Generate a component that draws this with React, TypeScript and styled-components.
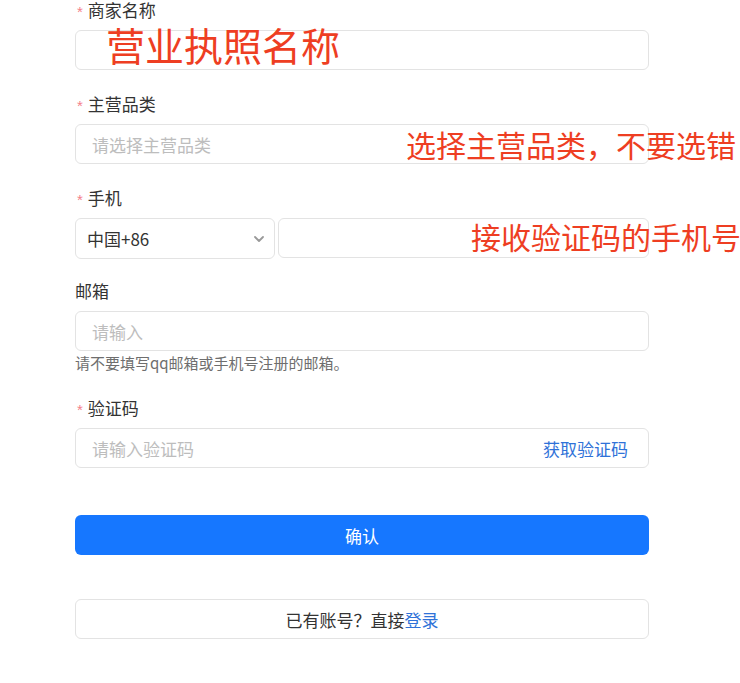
import styled, { createGlobalStyle } from "styled-components";

const GlobalStyle = createGlobalStyle`
  html, body {
    margin: 0;
    padding: 0;
    background: #ffffff;
  }
  body {
    font-family: "Noto Sans CJK SC", "Noto Sans", sans-serif;
    color: #333333;
  }
`;

type FieldProps = {
  label: string;
  required?: boolean;
  children: React.ReactNode;
  note?: string;
};

function Field({ label, required, children, note }: FieldProps) {
  return (
    <FieldWrap>
      <Label>
        {required && <Star>*</Star>}
        {label}
      </Label>
      {children}
      {note && <Hint>{note}</Hint>}
    </FieldWrap>
  );
}

export default function App() {
  return (
    <>
      <GlobalStyle />
      <Page>
        <Form>
          <Field label="商家名称" required>
            <Box>
              <TextInput />
              <Note $left={30} $top={-6} $size={39}>营业执照名称</Note>
            </Box>
          </Field>

          <Field label="主营品类" required>
            <Box>
              <TextInput placeholder="请选择主营品类" />
              <Note $left={330} $top={4} $size={30}>选择主营品类，不要选错</Note>
            </Box>
          </Field>

          <Field label="手机" required>
            <PhoneRow>
              <Select>
                <span>中国+86</span>
                <svg width="12" height="8" viewBox="0 0 12 8">
                  <path d="M2 2 L6 6 L10 2" fill="none" stroke="#999999" strokeWidth="1.8" strokeLinecap="round" strokeLinejoin="round" />
                </svg>
              </Select>
              <Box $grow>
                <TextInput />
                <Note $left={192} $top={2} $size={30}>接收验证码的手机号</Note>
              </Box>
            </PhoneRow>
          </Field>

          <Field label="邮箱" note="请不要填写qq邮箱或手机号注册的邮箱。">
            <Box>
              <TextInput placeholder="请输入" />
            </Box>
          </Field>

          <Field label="验证码" required>
            <Box>
              <TextInput placeholder="请输入验证码" />
              <CodeLink>获取验证码</CodeLink>
            </Box>
          </Field>

          <SubmitButton>确认</SubmitButton>

          <LoginBox>
            已有账号？直接<LoginLink>登录</LoginLink>
          </LoginBox>
        </Form>
      </Page>
    </>
  );
}

const Page = styled.div`
  width: 740px;
  height: 683px;
  overflow: hidden;
  padding: 0 91px 0 75px;
  box-sizing: border-box;
`;

const Form = styled.div`
  display: flex;
  flex-direction: column;
  width: 574px;
`;

const FieldWrap = styled.div`
  display: flex;
  flex-direction: column;
  margin-bottom: 24px;

  &:nth-child(3) {
    margin-bottom: 22px;
  }
  &:nth-child(4) {
    margin-bottom: 23px;
  }
  &:nth-child(5) {
    margin-bottom: 47px;
  }
`;

const Label = styled.div`
  display: flex;
  align-items: center;
  height: 20px;
  line-height: 20px;
  font-size: 17px;
  color: #333333;
  margin-bottom: 10px;
`;

const Star = styled.span`
  color: #f4808a;
  font-size: 15px;
  margin: 4px 5px 0 2px;
  font-family: "Liberation Sans", sans-serif;
`;

const Box = styled.div<{ $grow?: boolean }>`
  position: relative;
  display: flex;
  align-items: center;
  height: 40px;
  box-sizing: border-box;
  border: 1px solid #e3e3e3;
  border-radius: 6px;
  background: #ffffff;
  ${(p) => (p.$grow ? "flex: 1;" : "")}
`;

const TextInput = styled.input`
  flex: 1;
  min-width: 0;
  height: 100%;
  border: none;
  outline: none;
  background: transparent;
  padding: 0 16px;
  font-size: 17px;
  font-family: "Noto Sans CJK SC", sans-serif;
  color: #333333;

  &::placeholder {
    color: #bdbdbd;
  }
`;

const Note = styled.span<{ $left: number; $top: number; $size: number }>`
  position: absolute;
  left: ${(p) => p.$left}px;
  top: ${(p) => p.$top}px;
  font-size: ${(p) => p.$size}px;
  line-height: 1;
  color: #ee3e22;
  white-space: nowrap;
  pointer-events: none;
`;

const PhoneRow = styled.div`
  display: flex;
  gap: 3px;
`;

const Select = styled.div`
  display: flex;
  align-items: center;
  justify-content: space-between;
  width: 200px;
  height: 41px;
  box-sizing: border-box;
  border: 1px solid #e3e3e3;
  border-radius: 6px;
  padding: 0 9px 0 11px;
  font-size: 17px;
  color: #333333;
`;

const Hint = styled.div`
  font-size: 15px;
  line-height: 24px;
  color: #6e6e6e;
`;

const CodeLink = styled.span`
  flex-shrink: 0;
  padding-right: 20px;
  font-size: 17px;
  color: #2f72d8;
`;

const SubmitButton = styled.button`
  height: 40px;
  border: none;
  border-radius: 6px;
  background: #1677ff;
  color: #ffffff;
  font-size: 17px;
  font-family: "Noto Sans CJK SC", sans-serif;
  margin-bottom: 44px;
`;

const LoginBox = styled.div`
  display: flex;
  align-items: center;
  justify-content: center;
  height: 40px;
  box-sizing: border-box;
  border: 1px solid #e3e3e3;
  border-radius: 6px;
  font-size: 17px;
  color: #333333;
`;

const LoginLink = styled.span`
  color: #2f72d8;
`;
